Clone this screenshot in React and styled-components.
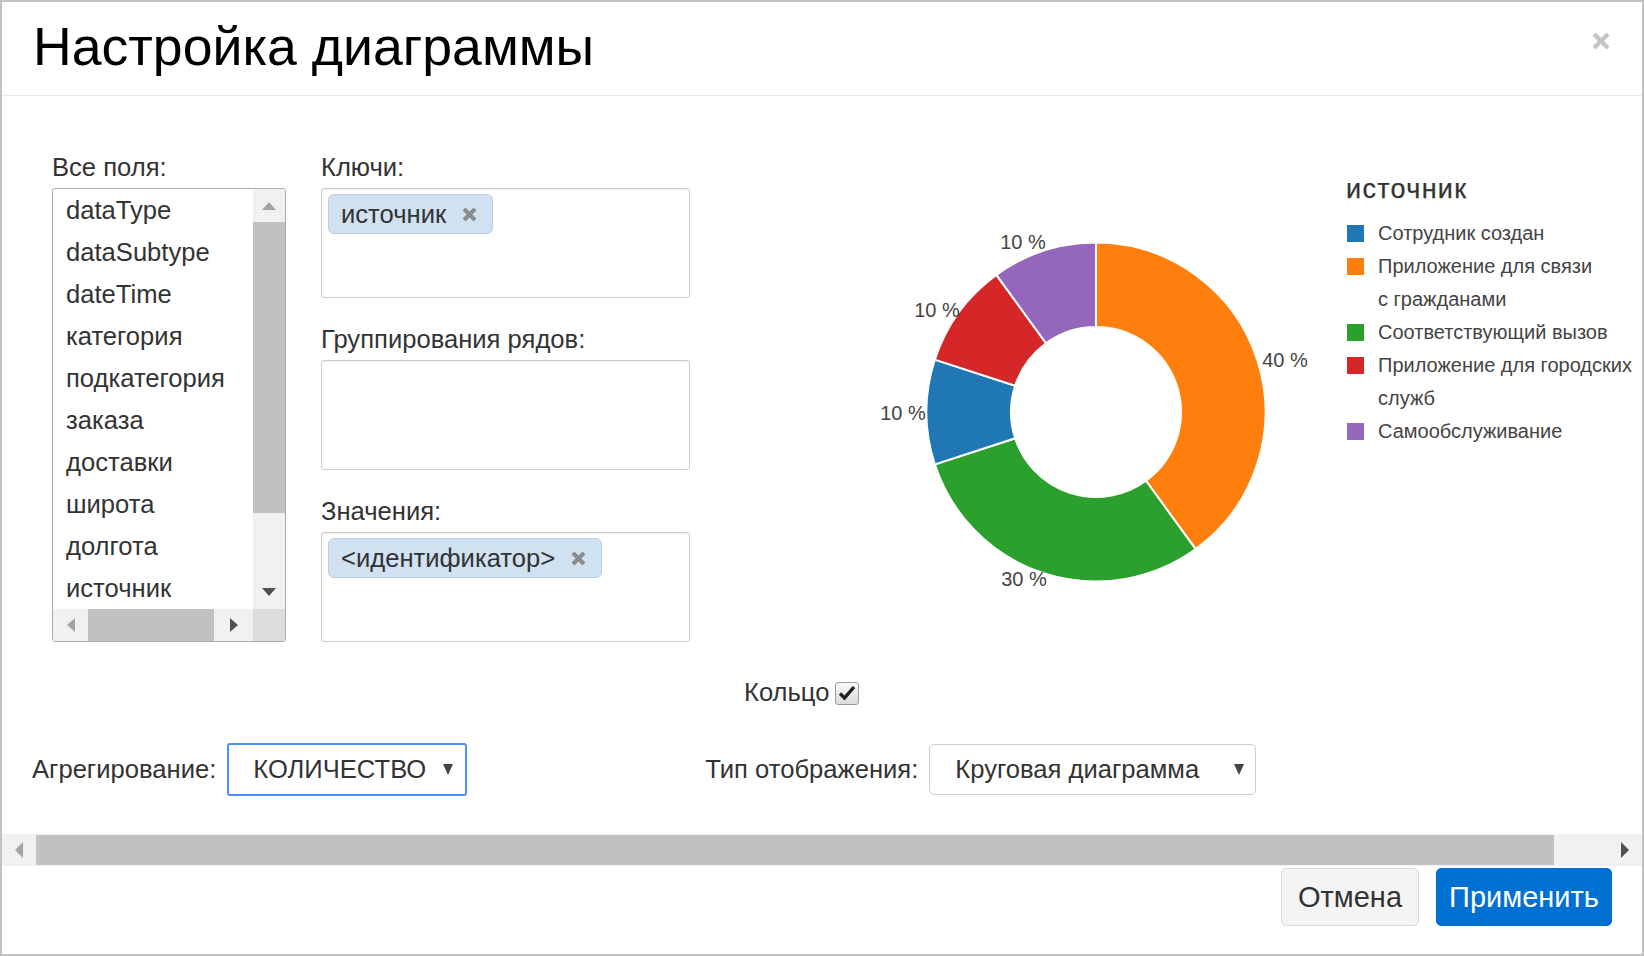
import React from 'react';
import styled, { createGlobalStyle } from 'styled-components';

const GlobalStyle = createGlobalStyle`
  html, body {
    margin: 0;
    padding: 0;
    background: #fff;
  }
  body {
    font-family: "Liberation Sans", Arial, sans-serif;
    color: #333;
  }
  * {
    box-sizing: border-box;
  }
`;

const FIELDS = [
  'dataType',
  'dataSubtype',
  'dateTime',
  'категория',
  'подкатегория',
  'заказа',
  'доставки',
  'широта',
  'долгота',
  'источник',
];

// slices go clockwise from 12 o'clock
const SLICES = [
  { color: '#ff7f0e', value: 40 },
  { color: '#2ca02c', value: 30 },
  { color: '#1f77b4', value: 10 },
  { color: '#d62728', value: 10 },
  { color: '#9467bd', value: 10 },
];

const PIE_LABELS = [
  { text: '40 %', x: 425, y: 208 },
  { text: '30 %', x: 164, y: 427 },
  { text: '10 %', x: 43, y: 261 },
  { text: '10 %', x: 77, y: 158 },
  { text: '10 %', x: 163, y: 90 },
];

const LEGEND = [
  { color: '#1f77b4', lines: ['Сотрудник создан'] },
  { color: '#ff7f0e', lines: ['Приложение для связи', 'с гражданами'] },
  { color: '#2ca02c', lines: ['Соответствующий вызов'] },
  { color: '#d62728', lines: ['Приложение для городских', 'служб'] },
  { color: '#9467bd', lines: ['Самообслуживание'] },
];

const Frame = styled.div`
  width: 1644px;
  height: 956px;
  border: 2px solid #c2c2c2;
  background: #fff;
  display: flex;
  flex-direction: column;
  overflow: hidden;
`;

const Header = styled.header`
  height: 94px;
  flex-shrink: 0;
  border-bottom: 1px solid #e8e8e8;
  display: flex;
  align-items: flex-start;
  padding: 18px 32px 0 31px;
`;

const Title = styled.h1`
  flex: 1;
  margin: 0;
  font-size: 53.6px;
  line-height: 53px;
  font-weight: normal;
  color: #000;
`;

const CloseIcon = styled.svg`
  margin-top: 12px;
  flex-shrink: 0;
`;

const Body = styled.div`
  flex: 1;
  display: flex;
  flex-direction: column;
  padding-top: 56px;
`;

const TopSection = styled.div`
  display: flex;
  align-items: flex-start;
  padding-left: 50px;
`;

const Column = styled.div`
  display: flex;
  flex-direction: column;
  width: ${({ width }) => width}px;
  margin-left: ${({ offset }) => offset || 0}px;
  flex-shrink: 0;
`;

const FieldLabel = styled.div`
  font-size: 25.6px;
  line-height: 30px;
  margin-bottom: 6px;
  color: #333;
`;

const ListBox = styled.div`
  height: 454px;
  border: 1px solid #ababab;
  border-radius: 3px;
  display: grid;
  grid-template-columns: 1fr 32px;
  grid-template-rows: 1fr 32px;
  overflow: hidden;
`;

const ItemList = styled.div`
  overflow: hidden;
  padding-left: 13px;
`;

const Item = styled.div`
  font-size: 25.6px;
  line-height: 42px;
  white-space: nowrap;
  color: #333;
`;

const VTrack = styled.div`
  background: #f1f1f1;
  display: flex;
  flex-direction: column;
`;

const HTrack = styled.div`
  background: #f1f1f1;
  display: flex;
  align-items: stretch;
`;

const ArrowCell = styled.div`
  width: ${({ w }) => w}px;
  height: ${({ h }) => h}px;
  display: flex;
  align-items: center;
  justify-content: center;
  flex-shrink: 0;
`;

const Thumb = styled.div`
  background: #c1c1c1;
  flex-shrink: 0;
  width: ${({ w }) => (w ? `${w}px` : 'auto')};
  height: ${({ h }) => (h ? `${h}px` : 'auto')};
`;

const Spacer = styled.div`
  flex: 1;
`;

const Corner = styled.div`
  background: #dcdcdc;
`;

const DropBox = styled.div`
  height: 110px;
  border: 1px solid #cccccc;
  border-radius: 3px;
  box-shadow: inset 0 1px 1px rgba(0, 0, 0, 0.075);
  padding: 5px 6px;
  margin-bottom: ${({ last }) => (last ? 0 : 26)}px;
`;

const Chip = styled.span`
  display: inline-flex;
  align-items: center;
  gap: 16px;
  height: 40px;
  padding: 0 15px 0 12px;
  background: #d0e1f1;
  border: 1px solid #b8cfe6;
  border-radius: 6px;
  font-size: 25.6px;
  color: #333;
`;

const ChartSvg = styled.svg`
  margin-left: 170px;
  flex-shrink: 0;
`;

const Legend = styled.div`
  margin-left: 26px;
  padding-top: 22px;
  display: flex;
  flex-direction: column;
`;

const LegendTitle = styled.div`
  font-size: 27px;
  line-height: 30px;
  font-weight: normal;
  letter-spacing: 1.3px;
  -webkit-text-stroke: 0.25px #333;
  color: #333;
  margin-bottom: 13px;
`;

const LegendItem = styled.div`
  display: flex;
  align-items: flex-start;
  gap: 14px;
  padding-left: 1px;
  font-size: 20px;
  line-height: 33px;
  color: #444;
  white-space: nowrap;
`;

const Swatch = styled.span`
  width: 17px;
  height: 17px;
  margin-top: 8px;
  flex-shrink: 0;
  background: ${({ color }) => color};
`;

const RingRow = styled.label`
  display: flex;
  align-items: baseline;
  gap: 6px;
  margin-top: 35px;
  padding-left: 742px;
  font-size: 25.6px;
  line-height: 30px;
  color: #333;
`;

const CheckBox = styled.span`
  display: inline-flex;
  align-items: center;
  justify-content: center;
  width: 24px;
  height: 23px;
  margin-bottom: 3px;
  border: 1px solid #9c9c9c;
  border-radius: 3px;
  background: linear-gradient(#fafafa, #dcdcdc);
`;

const FormRow = styled.div`
  display: flex;
  align-items: center;
  height: 53px;
  margin-top: 35px;
  padding-left: 30px;
`;

const FormLabel = styled.span`
  font-size: 25.6px;
  color: #333;
  margin-left: ${({ offset }) => offset || 0}px;
  margin-right: 11px;
  white-space: nowrap;
`;

const Select = styled.div`
  display: flex;
  align-items: center;
  justify-content: space-between;
  width: ${({ width }) => width}px;
  height: ${({ focused }) => (focused ? 53 : 51)}px;
  padding: 0 ${({ focused }) => (focused ? 12 : 11)}px 0 ${({ focused }) => (focused ? 24 : 25)}px;
  border: ${({ focused }) => (focused ? '2px solid #4d90fe' : '1px solid #cccccc')};
  border-radius: ${({ focused }) => (focused ? 3 : 5)}px;
  font-size: 25.6px;
  color: #333;
  background: #fff;
`;

const PageScroll = styled.div`
  height: 32px;
  flex-shrink: 0;
  background: #f1f1f1;
  display: flex;
  align-items: center;
`;

const Footer = styled.footer`
  flex-shrink: 0;
  height: 88px;
  display: flex;
  justify-content: flex-end;
  align-items: flex-start;
  gap: 17px;
  padding: 2px 30px 0 0;
`;

const Button = styled.button`
  height: 58px;
  width: ${({ width }) => width}px;
  border-radius: 5px;
  font-family: "Liberation Sans", Arial, sans-serif;
  font-size: 29px;
  padding: 0;
  cursor: pointer;
  border: 1px solid ${({ primary }) => (primary ? '#0070d2' : '#d8d8d8')};
  background: ${({ primary }) => (primary ? '#0070d2' : '#f4f4f4')};
  color: ${({ primary }) => (primary ? '#fff' : '#333')};
`;

function Triangle({ dir, color, w = 12, h = 7 }) {
  const pts = {
    up: `0,${h} ${w},${h} ${w / 2},0`,
    down: `0,0 ${w},0 ${w / 2},${h}`,
    left: `${h},0 ${h},${w} 0,${w / 2}`,
    right: `0,0 0,${w} ${h},${w / 2}`,
  }[dir];
  const horiz = dir === 'left' || dir === 'right';
  return (
    <svg width={horiz ? h : w} height={horiz ? w : h}>
      <polygon points={pts} fill={color} />
    </svg>
  );
}

function ChipClose() {
  return (
    <svg width="15" height="15" viewBox="0 0 15 15">
      <path d="M2 2 L13 13 M13 2 L2 13" stroke="#8c8c8c" strokeWidth="4" />
    </svg>
  );
}

function SelectArrow() {
  return (
    <svg width="10" height="11">
      <polygon points="0,0 10,0 5,11" fill="#444" />
    </svg>
  );
}

function arcPath(cx, cy, R, r, a0, a1) {
  const pt = (rad, a) => {
    const t = (a * Math.PI) / 180;
    return `${cx + rad * Math.sin(t)} ${cy - rad * Math.cos(t)}`;
  };
  const large = a1 - a0 > 180 ? 1 : 0;
  return `M ${pt(R, a0)} A ${R} ${R} 0 ${large} 1 ${pt(R, a1)} L ${pt(r, a1)} A ${r} ${r} 0 ${large} 0 ${pt(r, a0)} Z`;
}

function DonutChart() {
  const cx = 236;
  const cy = 260;
  let angle = 0;
  const paths = SLICES.map((s, i) => {
    const a0 = angle;
    const a1 = angle + (s.value / 100) * 360;
    angle = a1;
    return <path key={i} d={arcPath(cx, cy, 169.5, 85, a0, a1)} fill={s.color} stroke="#fff" strokeWidth="2" />;
  });
  return (
    <ChartSvg width="460" height="480">
      {paths}
      {PIE_LABELS.map((l, i) => (
        <text
          key={i}
          x={l.x}
          y={l.y + 7}
          textAnchor="middle"
          fontSize="20"
          fill="#444"
          fontFamily='"Liberation Sans", Arial, sans-serif'
        >
          {l.text}
        </text>
      ))}
    </ChartSvg>
  );
}

export default function App() {
  return (
    <>
      <GlobalStyle />
      <Frame>
        <Header>
          <Title>Настройка диаграммы</Title>
          <CloseIcon width="18" height="18" viewBox="0 0 18 18">
            <path d="M2 2 L16 16 M16 2 L2 16" stroke="#c5c5c5" strokeWidth="4.5" />
          </CloseIcon>
        </Header>

        <Body>
          <TopSection>
            <Column width={234}>
              <FieldLabel>Все поля:</FieldLabel>
              <ListBox>
                <ItemList>
                  {FIELDS.map((f) => (
                    <Item key={f}>{f}</Item>
                  ))}
                </ItemList>
                <VTrack>
                  <ArrowCell w={32} h={33}>
                    <Triangle dir="up" color="#a3a3a3" w={14} h={8} />
                  </ArrowCell>
                  <Thumb h={291} />
                  <Spacer />
                  <ArrowCell w={32} h={34}>
                    <Triangle dir="down" color="#505050" w={14} h={8} />
                  </ArrowCell>
                </VTrack>
                <HTrack>
                  <ArrowCell w={35} h={32}>
                    <Triangle dir="left" color="#a3a3a3" w={14} h={8} />
                  </ArrowCell>
                  <Thumb w={126} />
                  <Spacer />
                  <ArrowCell w={38} h={32}>
                    <Triangle dir="right" color="#505050" w={14} h={8} />
                  </ArrowCell>
                </HTrack>
                <Corner />
              </ListBox>
            </Column>

            <Column width={369} offset={35}>
              <FieldLabel>Ключи:</FieldLabel>
              <DropBox>
                <Chip>
                  источник
                  <ChipClose />
                </Chip>
              </DropBox>
              <FieldLabel>Группирования рядов:</FieldLabel>
              <DropBox />
              <FieldLabel>Значения:</FieldLabel>
              <DropBox last>
                <Chip>
                  &lt;идентификатор&gt;
                  <ChipClose />
                </Chip>
              </DropBox>
            </Column>

            <DonutChart />

            <Legend>
              <LegendTitle>источник</LegendTitle>
              {LEGEND.map((item) => (
                <LegendItem key={item.color}>
                  <Swatch color={item.color} />
                  <div>
                    {item.lines.map((line) => (
                      <div key={line}>{line}</div>
                    ))}
                  </div>
                </LegendItem>
              ))}
            </Legend>
          </TopSection>

          <RingRow>
            Кольцо
            <CheckBox>
              <svg width="18" height="16" viewBox="0 0 18 16">
                <path d="M2 8.5 L6.5 13 L16 2" stroke="#222" strokeWidth="3.4" fill="none" />
              </svg>
            </CheckBox>
          </RingRow>

          <FormRow>
            <FormLabel>Агрегирование:</FormLabel>
            <Select width={240} focused>
              КОЛИЧЕСТВО
              <SelectArrow />
            </Select>
            <FormLabel offset={238}>Тип отображения:</FormLabel>
            <Select width={327}>
              Круговая диаграмма
              <SelectArrow />
            </Select>
          </FormRow>
        </Body>

        <PageScroll>
          <ArrowCell w={34} h={32}>
            <Triangle dir="left" color="#a3a3a3" w={16} h={8} />
          </ArrowCell>
          <Thumb w={1518} h={30} />
          <Spacer />
          <ArrowCell w={34} h={32}>
            <Triangle dir="right" color="#505050" w={16} h={8} />
          </ArrowCell>
        </PageScroll>

        <Footer>
          <Button width={138}>Отмена</Button>
          <Button width={176} primary>
            Применить
          </Button>
        </Footer>
      </Frame>
    </>
  );
}
